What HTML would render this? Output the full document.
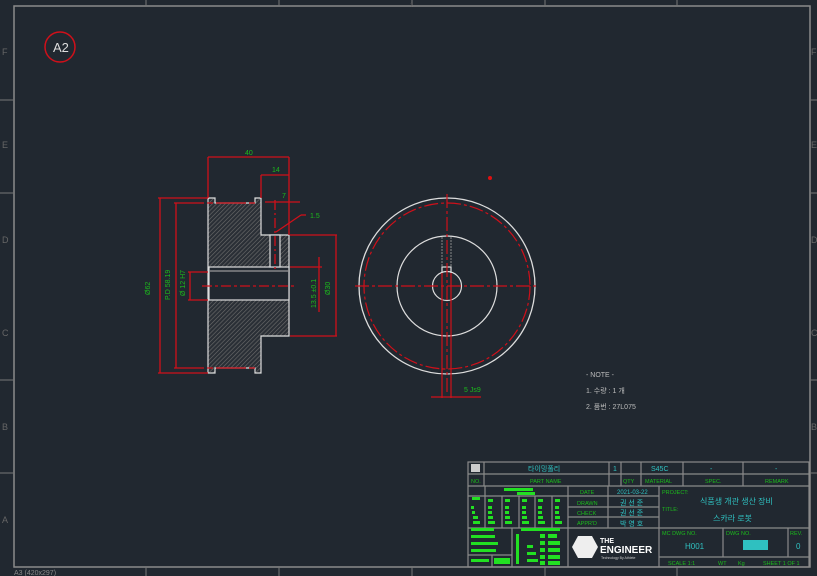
<!DOCTYPE html>
<html><head><meta charset="utf-8"><style>
html,body{margin:0;padding:0;background:#212830;}
svg{display:block}
text{font-family:"Liberation Sans","Noto Sans CJK KR",sans-serif;}
</style></head><body>
<svg width="817" height="576" viewBox="0 0 817 576" xmlns="http://www.w3.org/2000/svg">
<defs>
<pattern id="h" width="3" height="3" patternUnits="userSpaceOnUse" patternTransform="rotate(45)">
<rect width="3" height="3" fill="#2a2f36"/><line x1="0" y1="0" x2="0" y2="3" stroke="#6e6e6e" stroke-width="1.2"/>
</pattern>
</defs>
<rect width="817" height="576" fill="#212830"/>
<!-- border -->
<rect x="14" y="6" width="796" height="561" fill="none" stroke="#8a8a8a" stroke-width="1.5"/>
<g stroke="#777" stroke-width="1">
<line x1="0" y1="100" x2="14" y2="100"/><line x1="0" y1="193" x2="14" y2="193"/><line x1="0" y1="380" x2="14" y2="380"/><line x1="0" y1="473" x2="14" y2="473"/>
<line x1="810" y1="100" x2="817" y2="100"/><line x1="810" y1="193" x2="817" y2="193"/><line x1="810" y1="380" x2="817" y2="380"/><line x1="810" y1="473" x2="817" y2="473"/>
<line x1="146" y1="567" x2="146" y2="576"/><line x1="279" y1="567" x2="279" y2="576"/><line x1="412" y1="567" x2="412" y2="576"/><line x1="545" y1="567" x2="545" y2="576"/><line x1="677" y1="567" x2="677" y2="576"/>
<line x1="146" y1="0" x2="146" y2="6"/><line x1="279" y1="0" x2="279" y2="6"/><line x1="412" y1="0" x2="412" y2="6"/><line x1="545" y1="0" x2="545" y2="6"/><line x1="677" y1="0" x2="677" y2="6"/>
</g>
<g fill="#666" font-size="9" font-family="Liberation Serif">
<text x="2" y="55" font-family="Liberation Serif">F</text><text x="2" y="148">E</text><text x="2" y="243">D</text><text x="2" y="336">C</text><text x="2" y="430">B</text><text x="2" y="523">A</text>
<text x="811" y="55">F</text><text x="811" y="148">E</text><text x="811" y="243">D</text><text x="811" y="336">C</text><text x="811" y="430">B</text>
<text x="14" y="575" font-size="7" fill="#888">A3 (420x297)</text>
<text x="410" y="7" font-size="6">1</text>
</g>
<!-- A2 -->
<circle cx="60" cy="47" r="15" fill="none" stroke="#d0101a" stroke-width="1.5"/>
<text x="53" y="52" fill="#ddd" font-size="13">A2</text>
<circle cx="490" cy="178" r="2" fill="#e01010"/>

<!-- side view -->
<g stroke="#ddd" stroke-width="1.2">
<path d="M208 198 H215 V203 H255 V198 H261 V235 H289 V336 H261 V373 H255 V368 H215 V373 H208 Z" fill="url(#h)"/>
<rect x="209" y="267" width="80" height="33" fill="#212830" stroke="#ddd"/>
<line x1="209" y1="271" x2="289" y2="271" stroke="#999"/>
<rect x="270" y="235" width="10" height="32" fill="#212830"/>
</g>
<g stroke="#d0101a" stroke-width="1.3" fill="none">
<line x1="208" y1="157" x2="289" y2="157"/><line x1="208" y1="157" x2="208" y2="198"/><line x1="289" y1="157" x2="289" y2="235"/>
<line x1="261" y1="175" x2="289" y2="175"/><line x1="261" y1="175" x2="261" y2="198"/>
<line x1="265" y1="202" x2="300" y2="202"/><line x1="275" y1="200" x2="275" y2="270" stroke-dasharray="10 3 2 3"/>
<line x1="276" y1="232" x2="301" y2="215"/><line x1="301" y1="215" x2="306" y2="215"/>
<line x1="158" y1="198" x2="208" y2="198"/><line x1="158" y1="373" x2="208" y2="373"/><line x1="160" y1="198" x2="160" y2="373"/>
<line x1="174" y1="203" x2="255" y2="203" stroke-dasharray="30 3 6 3"/><line x1="174" y1="368" x2="255" y2="368" stroke-dasharray="30 3 6 3"/><line x1="176" y1="203" x2="176" y2="368"/>
<line x1="188" y1="272" x2="208" y2="272"/><line x1="188" y1="300" x2="208" y2="300"/><line x1="190" y1="272" x2="190" y2="300"/>
<line x1="290" y1="235" x2="337" y2="235"/><line x1="290" y1="336" x2="337" y2="336"/><line x1="336" y1="235" x2="336" y2="336"/>
<line x1="290" y1="267" x2="322" y2="267"/><line x1="319" y1="257" x2="319" y2="312"/>
<line x1="202" y1="286" x2="296" y2="286" stroke-dasharray="10 3 3 3"/>
</g>
<g fill="#1cba1c" font-size="7">
<text x="245" y="155">40</text><text x="272" y="172">14</text><text x="282" y="198">7</text><text x="310" y="218">1.5</text>
<text x="150" y="295" transform="rotate(-90 150 295)">Ø62</text>
<text x="170" y="300" transform="rotate(-90 170 300)">P.D 58.19</text>
<text x="185" y="296" transform="rotate(-90 185 296)">Ø 12 H7</text>
<text x="330" y="295" transform="rotate(-90 330 295)">Ø30</text>
<text x="316" y="308" transform="rotate(-90 316 308)">13.5 ±0.1</text>
</g>

<!-- front view -->
<g fill="none">
<circle cx="447" cy="286" r="88" stroke="#ddd" stroke-width="1.3"/>
<circle cx="447" cy="286" r="83" stroke="#d0101a" stroke-width="1.2" stroke-dasharray="14 3 3 3"/>
<circle cx="447" cy="286" r="50" stroke="#ddd" stroke-width="1.2"/>
<circle cx="447" cy="286" r="14.5" stroke="#ddd" stroke-width="1.2"/>
<path d="M442 273 V267 H451 V273" stroke="#ddd" stroke-width="1.2"/>
<path d="M442 266 V236 M451 266 V236" stroke="#888" stroke-dasharray="2 1"/>
<g stroke="#d0101a" stroke-width="1.2">
<line x1="355" y1="286" x2="538" y2="286" stroke-dasharray="14 3 3 3"/>
<line x1="447" y1="194" x2="447" y2="395" stroke-dasharray="14 3 3 3"/>
<line x1="442" y1="273" x2="442" y2="398"/><line x1="451" y1="273" x2="451" y2="398"/>
<line x1="431" y1="397" x2="481" y2="397"/>
</g></g>
<text x="464" y="392" fill="#1cba1c" font-size="7">5 Js9</text>

<!-- note -->
<g fill="#bbb" font-size="7">
<text x="586" y="377">- NOTE -</text>
<text x="586" y="393">1. 수량 : 1 개</text>
<text x="586" y="409">2. 품번 : 27L075</text>
</g>

<!-- title block -->
<g stroke="#8a8a8a" stroke-width="1.2" fill="none">
<rect x="468" y="462" width="341" height="105"/>
<line x1="468" y1="474" x2="809" y2="474"/><line x1="468" y1="486" x2="809" y2="486"/>
<line x1="484" y1="462" x2="484" y2="486"/><line x1="609" y1="462" x2="609" y2="486"/><line x1="621" y1="462" x2="621" y2="486"/>
<line x1="641" y1="462" x2="641" y2="486"/><line x1="683" y1="462" x2="683" y2="486"/><line x1="743" y1="462" x2="743" y2="486"/>
<line x1="568" y1="486" x2="568" y2="567"/><line x1="608" y1="486" x2="608" y2="528"/><line x1="659" y1="486" x2="659" y2="567"/>
<line x1="568" y1="496" x2="659" y2="496"/><line x1="568" y1="507" x2="659" y2="507"/><line x1="568" y1="517" x2="659" y2="517"/>
<line x1="468" y1="528" x2="809" y2="528"/>
<line x1="659" y1="557" x2="809" y2="557"/><line x1="723" y1="528" x2="723" y2="557"/><line x1="788" y1="528" x2="788" y2="557"/>
<line x1="468" y1="496" x2="568" y2="496"/><line x1="485" y1="486" x2="485" y2="528"/>
<line x1="502" y1="496" x2="502" y2="528"/><line x1="519" y1="496" x2="519" y2="528"/><line x1="535" y1="496" x2="535" y2="528"/><line x1="552" y1="496" x2="552" y2="528"/>
<line x1="512" y1="528" x2="512" y2="567"/><line x1="468" y1="555" x2="512" y2="555"/><line x1="492" y1="555" x2="492" y2="567"/>
</g>
<rect x="471" y="464" width="9" height="8" fill="#ccc"/>
<g fill="#2fc0c0" font-size="7">
<text x="528" y="471">타이밍풀리</text><text x="613" y="471">1</text><text x="651" y="471">S45C</text><text x="710" y="471">-</text><text x="775" y="471">-</text>
<text x="700" y="504" font-size="8">식품생 개관 생산 장비</text><text x="713" y="521" font-size="8">스카라 로봇</text>
<text x="685" y="549" font-size="8">H001</text><text x="796" y="549" font-size="8">0</text>
<text x="617" y="494" font-size="6">2021-03-22</text><text x="620" y="505">권 선 준</text><text x="620" y="515">권 선 준</text><text x="620" y="526">박 영 호</text>
</g>
<rect x="743" y="540" width="25" height="10" fill="#2fc0c0"/>
<g fill="#1cba1c" font-size="5.5">
<text x="471" y="483">NO.</text><text x="530" y="483">PART NAME</text><text x="623" y="483">QTY</text><text x="645" y="483">MATERIAL</text><text x="705" y="483">SPEC.</text><text x="765" y="483">REMARK</text>
<text x="580" y="494">DATE</text><text x="577" y="505">DRAWN</text><text x="577" y="515">CHECK</text><text x="577" y="525">APPR'D</text>
<text x="662" y="494">PROJECT:</text><text x="662" y="511">TITLE:</text>
<text x="662" y="535">MC DWG NO.</text><text x="726" y="535">DWG NO.</text><text x="790" y="535">REV.</text>
<text x="668" y="565">SCALE 1:1</text><text x="718" y="565">WT</text><text x="738" y="565">Kg</text><text x="763" y="565">SHEET 1 OF 1</text>
</g>
<g fill="#22e022">
<rect x="504" y="488" width="29" height="3"/><rect x="517" y="492" width="18" height="3"/><rect x="472" y="497" width="8" height="3"/>
<rect x="488" y="499" width="5" height="3"/><rect x="505" y="499" width="5" height="3"/><rect x="522" y="499" width="5" height="3"/><rect x="538" y="499" width="5" height="3"/><rect x="555" y="499" width="5" height="3"/>
<rect x="471" y="506" width="3" height="3"/><rect x="488" y="506" width="4" height="3"/><rect x="505" y="506" width="4" height="3"/><rect x="522" y="506" width="4" height="3"/><rect x="538" y="506" width="4" height="3"/><rect x="555" y="506" width="4" height="3"/>
<rect x="472" y="511" width="3" height="3"/><rect x="488" y="511" width="4" height="3"/><rect x="505" y="511" width="4" height="3"/><rect x="522" y="511" width="4" height="3"/><rect x="538" y="511" width="4" height="3"/><rect x="555" y="511" width="4" height="3"/>
<rect x="473" y="516" width="5" height="3"/><rect x="488" y="516" width="5" height="3"/><rect x="505" y="516" width="5" height="3"/><rect x="522" y="516" width="5" height="3"/><rect x="538" y="516" width="5" height="3"/><rect x="555" y="516" width="5" height="3"/>
<rect x="473" y="521" width="7" height="3"/><rect x="488" y="521" width="7" height="3"/><rect x="505" y="521" width="7" height="3"/><rect x="522" y="521" width="7" height="3"/><rect x="538" y="521" width="7" height="3"/><rect x="555" y="521" width="7" height="3"/>
<rect x="471" y="528" width="23" height="3"/><rect x="471" y="535" width="24" height="3"/><rect x="471" y="542" width="27" height="3"/><rect x="471" y="549" width="25" height="3"/>
<rect x="471" y="559" width="18" height="3"/><rect x="494" y="558" width="16" height="6"/>
<rect x="521" y="528" width="39" height="3"/>
<rect x="540" y="534" width="5" height="4"/><rect x="548" y="534" width="9" height="4"/><rect x="540" y="541" width="5" height="4"/><rect x="548" y="541" width="12" height="4"/><rect x="540" y="548" width="5" height="4"/><rect x="548" y="548" width="12" height="4"/><rect x="540" y="555" width="5" height="4"/><rect x="548" y="555" width="12" height="4"/><rect x="540" y="561" width="5" height="4"/><rect x="548" y="561" width="12" height="4"/>
<rect x="516" y="534" width="3" height="30"/><rect x="527" y="545" width="6" height="3"/><rect x="527" y="552" width="9" height="3"/><rect x="527" y="559" width="11" height="3"/>
</g>
<!-- logo -->
<polygon points="578,536 592,536 598,547 592,558 578,558 572,547" fill="#eee"/>
<text x="600" y="543" fill="#fff" font-size="7" font-weight="bold">THE</text>
<text x="600" y="553" fill="#fff" font-size="10" font-weight="bold">ENGINEER</text>
<text x="601" y="559" fill="#ccc" font-size="3.5">Technology By Athlete</text>
</svg>
</body></html>
